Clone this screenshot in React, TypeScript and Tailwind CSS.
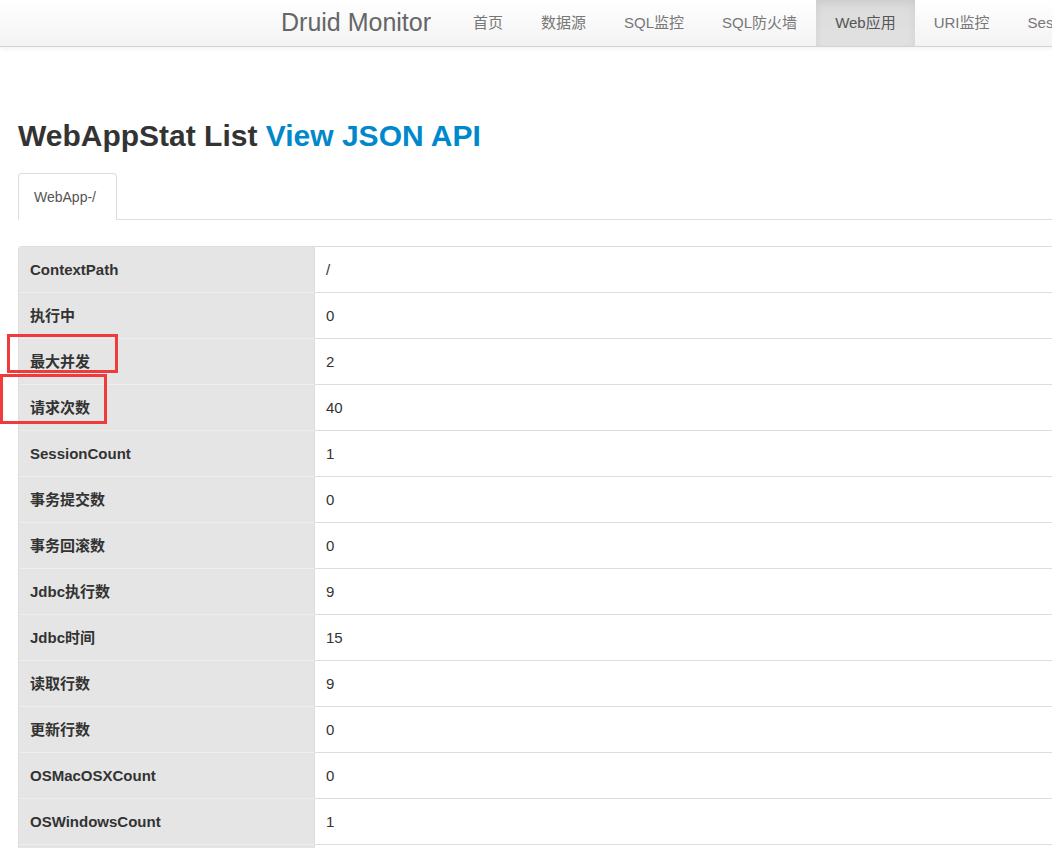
const navItems = ["首页", "数据源", "SQL监控", "SQL防火墙", "Web应用", "URI监控", "Session监控", "Spring监控"];

const rows: [string, string][] = [
  ["ContextPath", "/"],
  ["执行中", "0"],
  ["最大并发", "2"],
  ["请求次数", "40"],
  ["SessionCount", "1"],
  ["事务提交数", "0"],
  ["事务回滚数", "0"],
  ["Jdbc执行数", "9"],
  ["Jdbc时间", "15"],
  ["读取行数", "9"],
  ["更新行数", "0"],
  ["OSMacOSXCount", "0"],
  ["OSWindowsCount", "1"],
  ["OSLinuxCount", "0"],
  ["OSSymbianCount", "0"],
];

export default function App() {
  return (
    <div
      className="relative min-h-screen bg-white text-[#333] overflow-hidden"
      style={{ fontFamily: '"Liberation Sans", "Noto Sans CJK SC", sans-serif' }}
    >
      {/* navbar */}
      <div className="h-[47px] border-b border-[#d4d4d4] bg-gradient-to-b from-white to-[#f3f3f3] shadow-[0_1px_5px_rgba(0,0,0,0.075)]">
        <div className="flex h-[46px] pl-[266px] whitespace-nowrap">
          <a className="px-[15px] flex items-center text-[25px] text-[#666]">Druid Monitor</a>
          <ul className="ml-[8px] flex">
            {navItems.map((item) => (
              <li
                key={item}
                className={
                  item === "Web应用"
                    ? "px-[19px] flex items-center text-[15px] text-[#555] bg-gradient-to-b from-[#dbdbdb] to-[#e2e2e2] shadow-[inset_0_3px_9px_rgba(0,0,0,0.075)]"
                    : "px-[19px] flex items-center text-[15px] text-[#777]"
                }
              >
                {item}
              </li>
            ))}
          </ul>
        </div>
      </div>

      <div className="pl-[18px]">
        <h2 className="mt-[72px] text-[30px] leading-[33px] font-bold whitespace-nowrap">
          WebAppStat List <a className="text-[#0088cc]">View JSON API</a>
        </h2>

        {/* tabs */}
        <div className="mt-[21px] flex border-b border-[#ddd]">
          <div className="-mb-px w-[99px] h-[47px] pl-[15px] pt-[2px] flex items-center rounded-t-[4px] border border-[#ddd] border-b-transparent bg-white text-[14px] text-[#555]">
            WebApp-/
          </div>
        </div>

        {/* table */}
        <div className="mt-[26px] w-[1100px] border-t border-l border-[#ddd] rounded-tl-[4px] overflow-hidden">
          {rows.map(([label, value], i) => (
            <div key={label} className={i === 0 ? "flex h-[45px]" : "flex h-[46px]"}>
              <div
                className={
                  i === 0
                    ? "w-[296px] pl-[11px] pt-[1px] flex items-center bg-[#e5e5e5] text-[15px] font-bold border-r border-[#ddd]"
                    : "w-[296px] pl-[11px] pt-[2px] flex items-center bg-[#e5e5e5] text-[15px] font-bold border-r border-[#ddd] border-t border-t-[#eeeeee]"
                }
              >
                {label}
              </div>
              <div
                className={
                  i === 0
                    ? "flex-1 pl-[11px] pt-[1px] flex items-center text-[15px]"
                    : "flex-1 pl-[11px] pt-[2px] flex items-center text-[15px] border-t border-[#ddd]"
                }
              >
                {value}
              </div>
            </div>
          ))}
        </div>
      </div>

      {/* red annotation boxes */}
      <div className="absolute left-[7px] top-[334px] w-[111px] h-[39px] border-[3px] border-[#ef3b3b]" />
      <div className="absolute left-0 top-[374px] w-[107px] h-[50px] border-[3px] border-[#ef3b3b]" />
    </div>
  );
}
